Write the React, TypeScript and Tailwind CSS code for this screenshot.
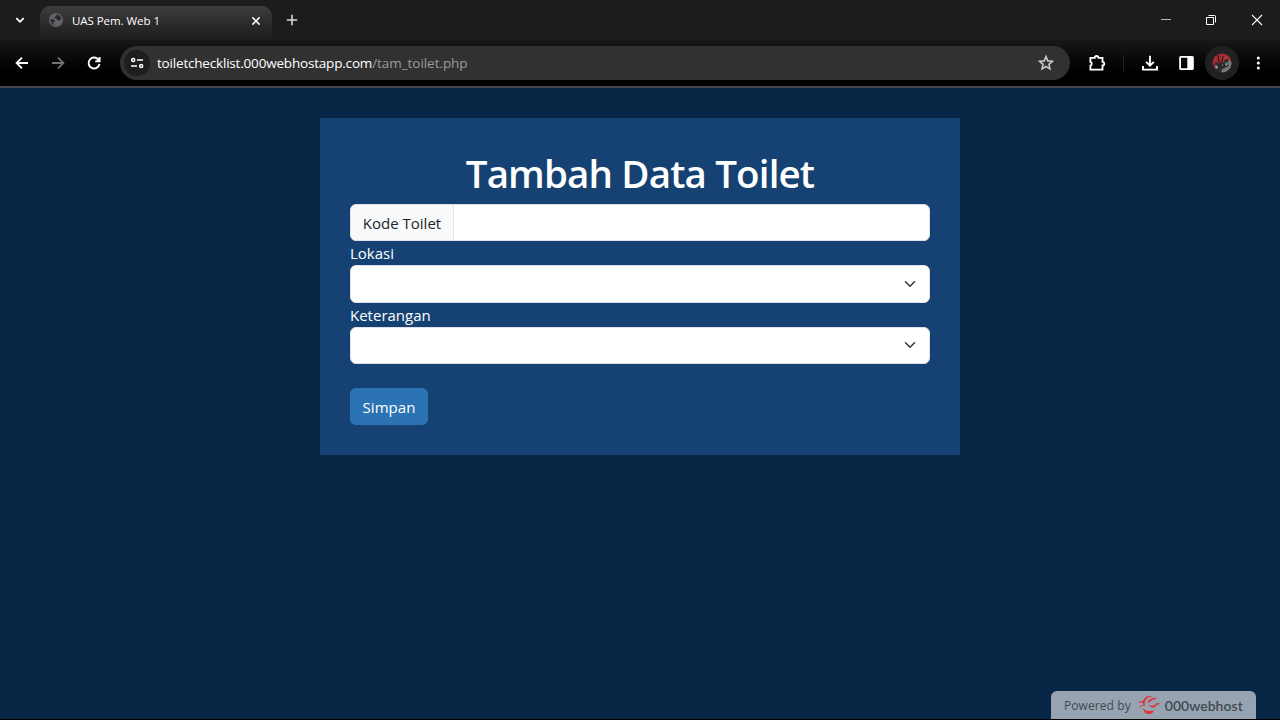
import React from "react";

type IconProps = { d: string; className?: string; width?: number };

function Stroke({ d, className = "", width = 1.8 }: IconProps) {
  return (
    <svg viewBox="0 0 18 18" className={`h-[18px] w-[18px] shrink-0 ${className}`} fill="none" stroke="currentColor" strokeWidth={width}>
      <path d={d} />
    </svg>
  );
}

function Globe() {
  return (
    <svg viewBox="0 0 16 16" className="-mt-px h-4 w-4 shrink-0">
      <circle cx="8" cy="8" r="7" fill="#606367" />
      <path d="M2.4 7.2H5l2 1.3v1.3H5.4v2.4l1.4 1.5Q3 12.9 2.4 7.2ZM8.2 2.4Q12.4 2.6 13.5 6.5L12 8.2 9.6 8.4 8.5 6.8 6.5 6.1V4.9l1.8-.7Z" fill="#29292b" />
    </svg>
  );
}

function TabStrip() {
  return (
    <div className="flex h-10 items-center text-white">
      <div className="flex w-10 justify-center">
        <Stroke d="m5.3 7.2 3.7 3.6 3.7-3.6" />
      </div>
      <div className="flex h-[34px] w-[232px] shrink-0 items-center self-end rounded-t-[10px] bg-linear-to-b from-[#3d3d3d] to-[#1c1c1c] pr-[7px] pb-[5px] pl-2">
        <Globe />
        <span className="mt-px ml-2 text-[11.5px] leading-4 tracking-[-0.05px] whitespace-nowrap">UAS Pem. Web 1</span>
        <Stroke className="ml-auto" d="m5.4 5.4 7.2 7.2m0-7.2-7.2 7.2" width={1.5} />
      </div>
      <Stroke className="ml-[11px] text-[#d8d8d8]" d="M9 3.8v10.4M3.8 9h10.4" width={1.6} />
      <div className="ml-auto flex items-center">
        <span className="flex w-[45px] justify-center">
          <Stroke d="M4 8.5h10" width={1} className="text-[#b9b9b9]" />
        </span>
        <span className="flex w-[45px] justify-center">
          <Stroke d="M4.5 6.5h7v7h-7zM6.5 4.5h6q1 0 1 1v6" width={1} />
        </span>
        <span className="flex w-[47px] justify-center">
          <Stroke d="m4 4 10 10M14 4 4 14" width={1.1} />
        </span>
      </div>
    </div>
  );
}

function Toolbar() {
  return (
    <div className="flex h-[46px] items-center bg-linear-to-b from-[#181818] via-[#090909] via-40% to-black text-white">
      <Stroke className="ml-[13px]" d="M15 9H3.8m5.2-5.4L3.6 9 9 14.4" />
      <Stroke className="ml-[18px] text-[#737373]" d="M3 9h11.2M9 3.6 14.4 9 9 14.4" />
      <Stroke className="ml-[18px]" d="M13.8 6.2A5.5 5.5 0 1 0 14.5 10M14.6 3v4.3h-4.3" width={1.9} />
      <div className="ml-[17px] flex h-[34px] w-[950px] shrink-0 items-center rounded-full bg-[#313131] pr-[15px] pl-1">
        <span className="flex h-[26px] w-[26px] items-center justify-center rounded-full bg-[#1e1e1e]">
          <svg viewBox="0 0 16 16" className="h-4 w-4" fill="none" stroke="white" strokeWidth="1.5">
            <circle cx="4.2" cy="5" r="1.5" />
            <path d="M8 5h6M2 11h6" />
            <circle cx="12.2" cy="11" r="1.5" />
          </svg>
        </span>
        <span className="ml-[7px] text-[13.5px] leading-5 tracking-[-0.19px] whitespace-nowrap">
          toiletchecklist.000webhostapp.com<span className="tracking-[-0.05px] text-[#9b9b9b]">/tam_toilet.php</span>
        </span>
        <Stroke className="ml-auto text-[#c8c8c8]" d="m9 2.6 1.8 4.3 4.6.4-3.5 3.1 1.1 4.5L9 12.5l-4 2.4L6.1 10.4 2.6 7.3l4.6-.4Z" width={1.6} />
      </div>
      <Stroke className="ml-[18px]" d="M2.4 3.8h4.4a1.8 1.8 0 0 1 3.6 0h4.1v4.1a1.7 1.7 0 0 1 0 3.5v4.2H2.4v-4a2 2 0 0 0 0-3.8Z" width={1.8} />
      <span className="ml-[17px] h-4 w-px bg-[#222222]" />
      <Stroke className="ml-[17px]" d="M9 1.8v9.4M5.2 7.8 9 11.6l3.8-3.8M2 12v3.6h14V12" width={1.9} />
      <svg viewBox="0 0 18 18" className="ml-[18px] h-[18px] w-[18px] shrink-0">
        <path fill="white" fillRule="evenodd" d="M3.7 2h11.6Q16.8 2 16.8 3.5v11Q16.8 16 15.3 16H3.7Q2.2 16 2.2 14.5v-11Q2.2 2 3.7 2ZM4 3.8v10.4h6.3V3.8Z" />
      </svg>
      <span className="ml-[10px] flex h-[34px] w-[34px] shrink-0 items-center justify-center rounded-full bg-[#202020]">
        <svg viewBox="0 0 20 20" className="h-5 w-5">
          <clipPath id="face"><circle cx="10" cy="10" r="9.6" /></clipPath>
          <g clipPath="url(#face)">
            <path fill="#2b292c" d="M0 0h20v20H0z" />
            <path fill="#a52c32" d="M2 0h18v9l-3-1-2-2-2 1-2 3-2-2-2 3-2-2-2 3-3-1Z" />
            <path fill="#77777b" d="m13 9 2 1 2-3 3 2v7l-4 3-7 1 1-4 3-1Z" />
            <path fill="#76262b" d="m0 11 4-2 1 4-1 4Z" />
            <path fill="#a0a0a0" d="m4 12 2 2-1 2-2-2Zm6-1 1 1-1 1Zm3-7 1 1 1-1Z" />
            <path stroke="#171719" strokeWidth="1" d="m6 2 1 8m4-7-1 5m2 4 2 2 3-2" fill="none" />
          </g>
        </svg>
      </span>
      <svg viewBox="0 0 18 18" className="ml-[10px] h-[18px] w-[18px] shrink-0" fill="white">
        <circle cx="9.3" cy="4" r="1.5" /><circle cx="9.3" cy="9" r="1.5" /><circle cx="9.3" cy="14" r="1.5" />
      </svg>
    </div>
  );
}

function SelectField({ label }: { label: string }) {
  return (
    <div>
      <label className="block text-[15px] leading-6 text-white">{label}</label>
      <div className="flex h-[37.5px] items-center justify-end rounded-md border border-[#dee2e6] bg-white pr-[13px]">
        <svg viewBox="0 0 16 16" className="h-3 w-3" fill="none" stroke="#343a40" strokeWidth="2.1" strokeLinecap="round" strokeLinejoin="round">
          <path d="m2 5 6 6 6-6" />
        </svg>
      </div>
    </div>
  );
}

function HostBadge() {
  return (
    <div className="absolute right-6 bottom-px flex h-7 w-[205px] items-center rounded-t-md bg-[#97a3b0] pl-[13px] text-[#414953]">
      <span className="mt-px text-[12px] leading-4 tracking-[0.08px] whitespace-nowrap">Powered by</span>
      <svg viewBox="0 0 24 20" className="ml-[6px] h-5 w-6 shrink-0" fill="#df3438">
        <path d="M7 4Q10 0 16 1 10 2 8 6 7 9 8 12 4 8 7 4Z" />
        <path d="M12 5q5-4 8-1-4-.6-7 3-3 2-2-1Z" />
        <path d="M1 8Q5 4 8 8 4 7 1 8Z" />
        <path d="M2 13q2-4 6-3-3 .5-6 3Z" />
        <path d="M12 10q5 2 8-2 3 0 3 1-3 0-5 3-4 2-6-2Z" />
        <path d="M6 13q2 3 6 3 4 0 5-1-1 4-5 4-5 0-6-6Z" />
      </svg>
      <span className="ml-1 mt-px font-[Lato] text-[14px] leading-4 font-semibold tracking-[0.03px]">000webhost</span>
    </div>
  );
}

export default function App() {
  return (
    <div className="relative flex h-[720px] w-[1280px] flex-col overflow-hidden bg-[#1c1c1c] font-['Open_Sans','Noto_Sans',sans-serif]">
      <TabStrip />
      <Toolbar />
      <main className="flex flex-1 justify-center border-t-2 border-b border-t-[#41464d] border-b-black bg-[#082645] pt-[30px]">
        <form className="h-[337px] w-[640px] bg-[#154272] px-[30px] pt-[32px]">
          <h1 className="h-[53.6px] text-center text-[38.5px] leading-[47px] font-semibold tracking-[-0.85px] whitespace-nowrap text-white">Tambah Data Toilet</h1>
          <div className="flex h-[37.5px] overflow-hidden rounded-md border border-[#dee2e6] bg-white">
            <span className="flex w-[103px] items-center justify-center border-r border-[#e4e7eb] bg-[#f8f9fa] pt-0.5 text-[15px] text-[#212529]">Kode Toilet</span>
          </div>
          <SelectField label="Lokasi" />
          <SelectField label="Keterangan" />
          <button type="button" className="mt-6 flex h-[37.33px] w-[78px] items-center justify-center rounded-md bg-[#2b73b3] pt-px text-[15px] tracking-[0.04px] text-white">Simpan</button>
        </form>
      </main>
      <HostBadge />
    </div>
  );
}
